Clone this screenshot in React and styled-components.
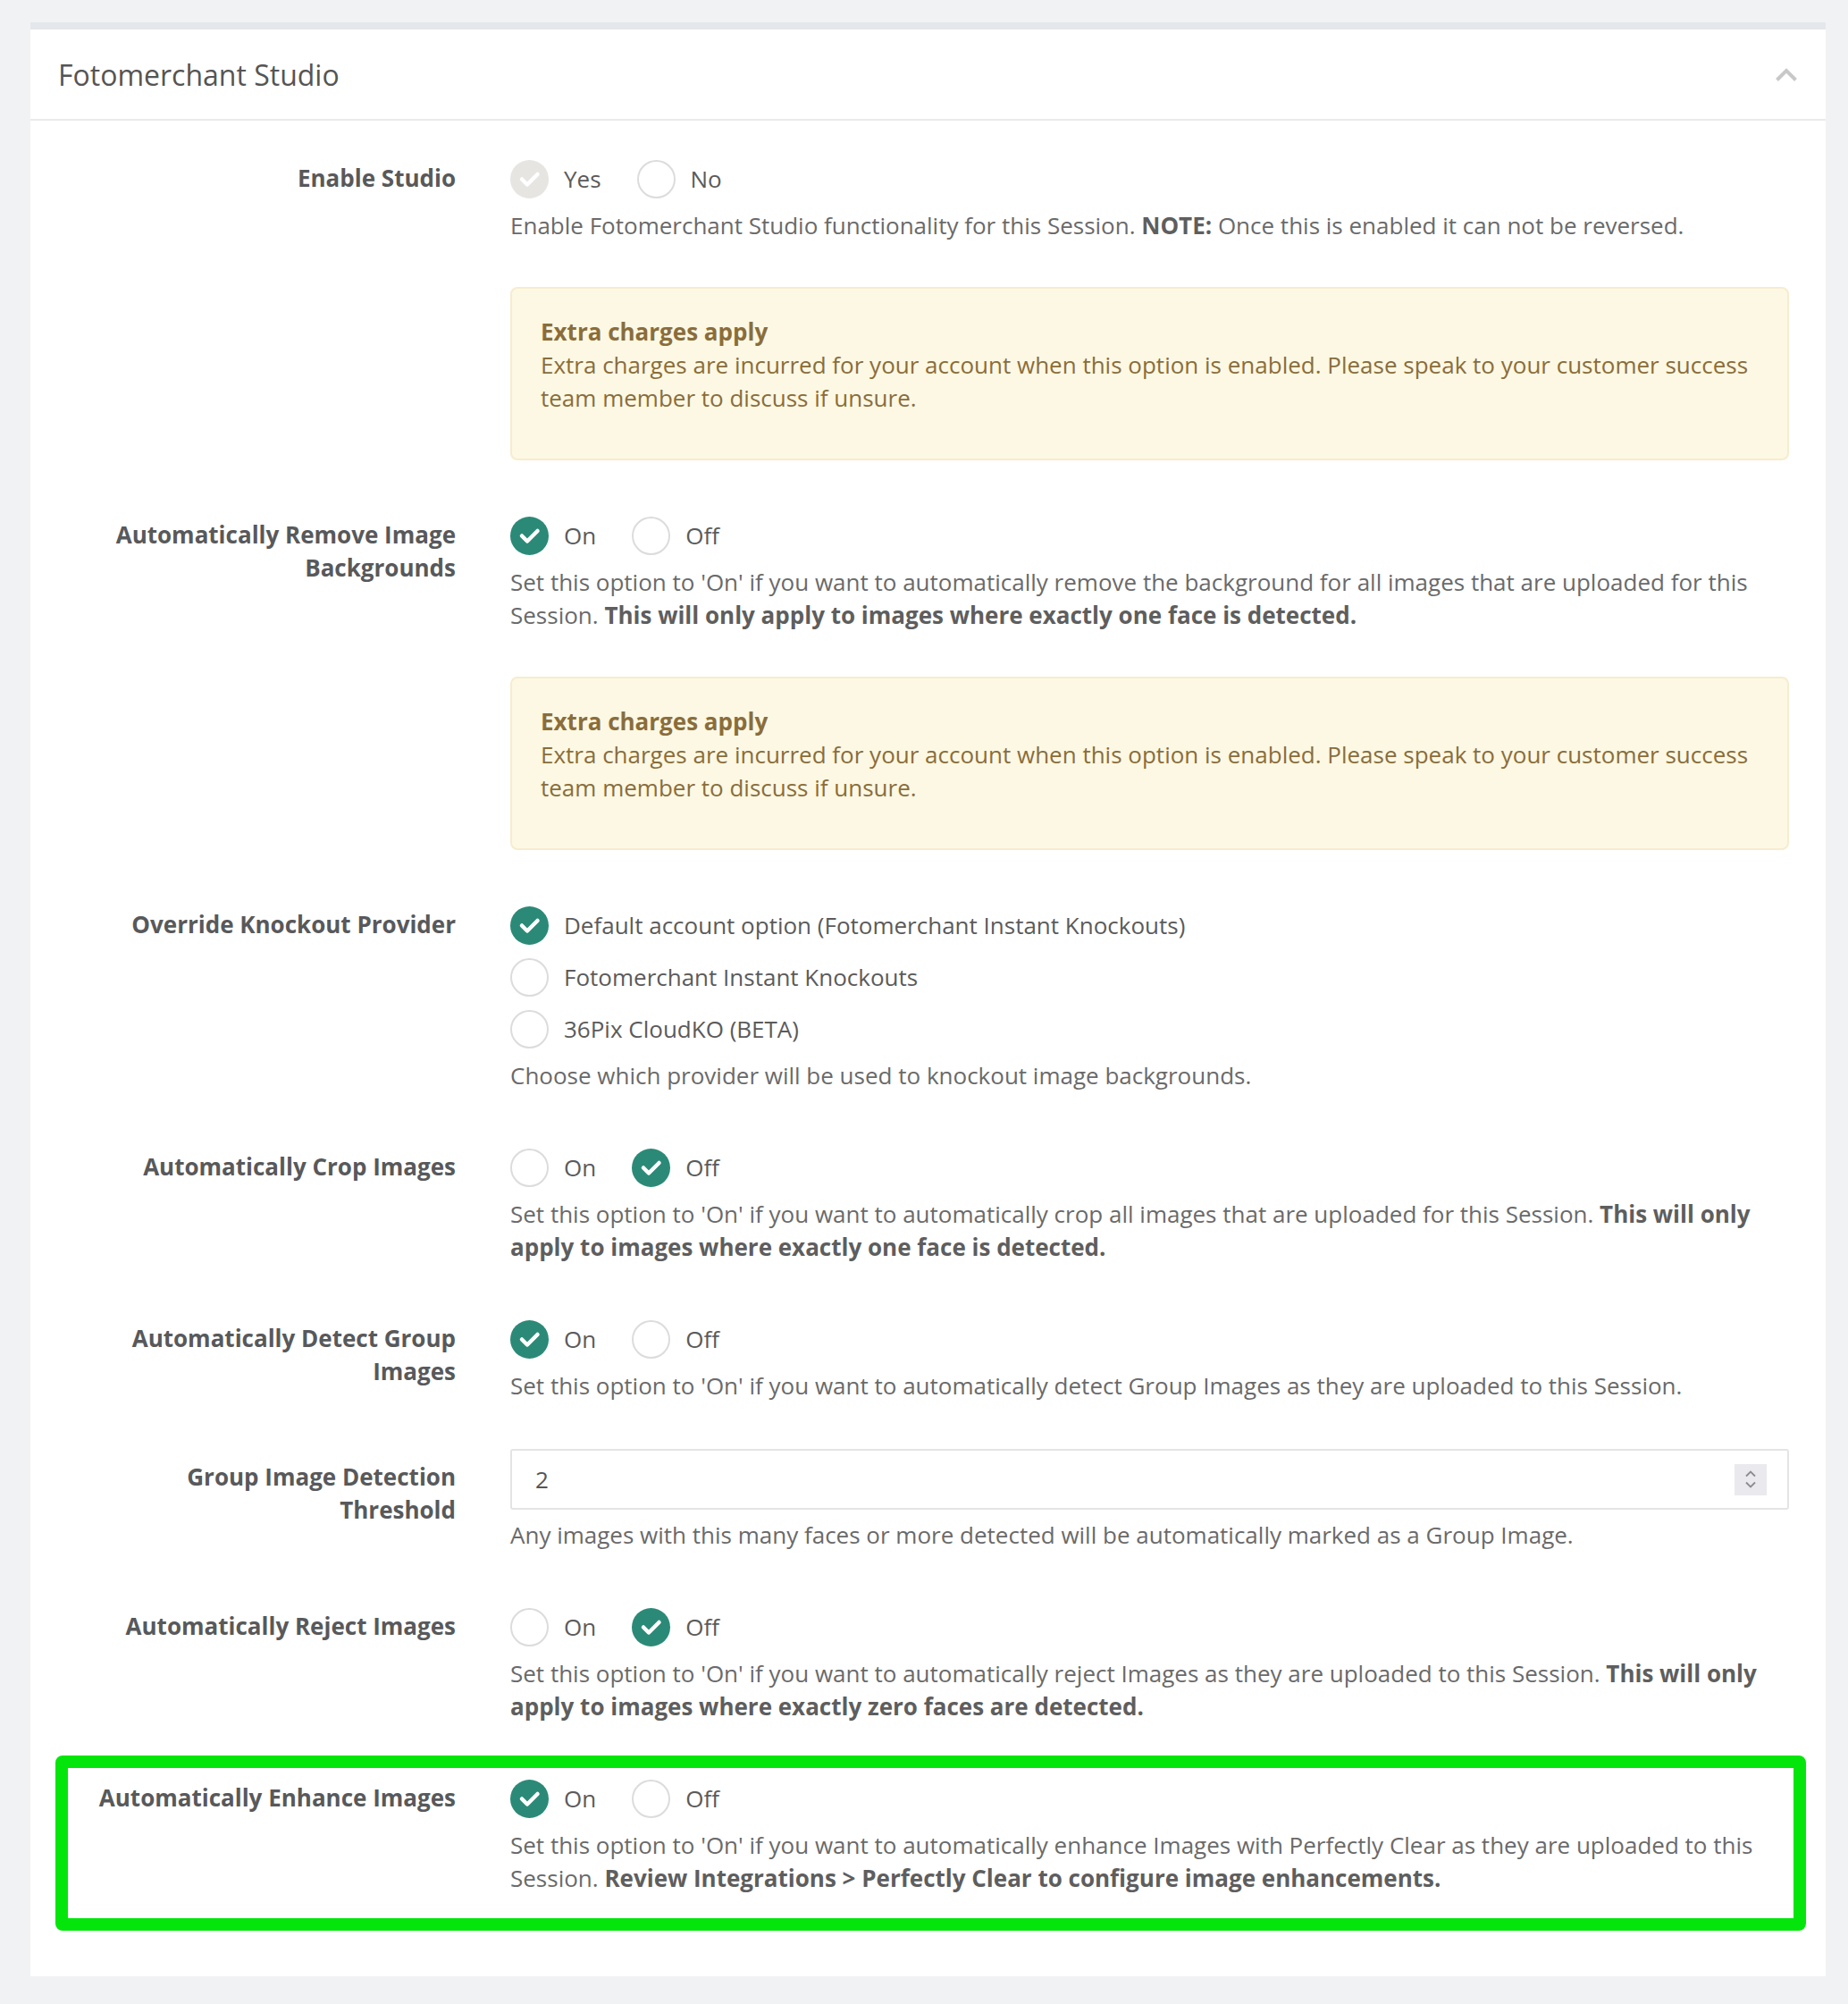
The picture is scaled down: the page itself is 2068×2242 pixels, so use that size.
import React from 'react'
import styled, { createGlobalStyle } from 'styled-components'

const GlobalStyle = createGlobalStyle`
  html, body {
    margin: 0;
    background: #f1f2f4;
  }
  body {
    font-family: "Open Sans", "Liberation Sans", sans-serif;
    color: #666;
  }
`

function App() {
  return (
    <Page>
      <GlobalStyle />
      <Card>
        <Header>
          <Title>Fotomerchant Studio</Title>
          <Collapse aria-label="Collapse">
            <svg width="26" height="17" viewBox="0 0 26 17">
              <polyline points="2.5,14.5 13,4 23.5,14.5" fill="none" stroke="#c8c8c8" strokeWidth="4" />
            </svg>
          </Collapse>
        </Header>

        <Body>
          <Row>
            <Label>Enable Studio</Label>
            <div>
              <Options>
                <Option label="Yes" checked disabled />
                <Option label="No" />
              </Options>
              <Help>
                Enable Fotomerchant Studio functionality for this Session. <b>NOTE:</b> Once this is enabled it can not be reversed.
              </Help>
              <ChargesAlert />
            </div>
          </Row>

          <Row>
            <Label>Automatically Remove Image Backgrounds</Label>
            <div>
              <Options>
                <Option label="On" checked />
                <Option label="Off" />
              </Options>
              <Help>
                Set this option to 'On' if you want to automatically remove the background for all images that are uploaded for this
                Session. <b>This will only apply to images where exactly one face is detected.</b>
              </Help>
              <ChargesAlert />
            </div>
          </Row>

          <Row>
            <Label>Override Knockout Provider</Label>
            <div>
              <Options $stacked>
                <Option label="Default account option (Fotomerchant Instant Knockouts)" checked />
                <Option label="Fotomerchant Instant Knockouts" />
                <Option label="36Pix CloudKO (BETA)" />
              </Options>
              <Help>Choose which provider will be used to knockout image backgrounds.</Help>
            </div>
          </Row>

          <Row>
            <Label>Automatically Crop Images</Label>
            <div>
              <Options>
                <Option label="On" />
                <Option label="Off" checked />
              </Options>
              <Help>
                Set this option to 'On' if you want to automatically crop all images that are uploaded for this Session. <b>This will only
                apply to images where exactly one face is detected.</b>
              </Help>
            </div>
          </Row>

          <Row>
            <Label>Automatically Detect Group Images</Label>
            <div>
              <Options>
                <Option label="On" checked />
                <Option label="Off" />
              </Options>
              <Help>Set this option to 'On' if you want to automatically detect Group Images as they are uploaded to this Session.</Help>
            </div>
          </Row>

          <Row>
            <Label>Group Image Detection Threshold</Label>
            <Control $raise>
              <NumberField>
                <span>2</span>
                <Spinner>
                  <svg width="14" height="24" viewBox="0 0 14 24">
                    <polyline points="2,8.5 7,3.5 12,8.5" fill="none" stroke="#8b8b90" strokeWidth="1.8" />
                    <polyline points="2,15.5 7,20.5 12,15.5" fill="none" stroke="#8b8b90" strokeWidth="1.8" />
                  </svg>
                </Spinner>
              </NumberField>
              <Help $gap={10}>Any images with this many faces or more detected will be automatically marked as a Group Image.</Help>
            </Control>
          </Row>

          <Row>
            <Label>Automatically Reject Images</Label>
            <div>
              <Options>
                <Option label="On" />
                <Option label="Off" checked />
              </Options>
              <Help>
                Set this option to 'On' if you want to automatically reject Images as they are uploaded to this Session. <b>This will only
                apply to images where exactly zero faces are detected.</b>
              </Help>
            </div>
          </Row>

          <Highlight>
            <Row $labelCol={434} $padRight={5}>
              <Label>Automatically Enhance Images</Label>
              <div>
                <Options>
                  <Option label="On" checked />
                  <Option label="Off" />
                </Options>
                <Help>
                  Set this option to 'On' if you want to automatically enhance Images with Perfectly Clear as they are uploaded to this
                  Session. <b>Review Integrations &gt; Perfectly Clear to configure image enhancements.</b>
                </Help>
              </div>
            </Row>
          </Highlight>
        </Body>
      </Card>
    </Page>
  )
}

function Option({ label, checked, disabled }) {
  return (
    <OptionItem>
      <Radio $checked={checked} $disabled={disabled}>
        {checked && (
          <svg width="43" height="43" viewBox="0 0 43 43">
            <polyline points="13,21.5 19,27.5 30.5,16" fill="none" stroke="#fff" strokeWidth="4.5" strokeLinecap="round" strokeLinejoin="round" />
          </svg>
        )}
      </Radio>
      <OptionText>{label}</OptionText>
    </OptionItem>
  )
}

function ChargesAlert() {
  return (
    <Alert>
      <AlertTitle>Extra charges apply</AlertTitle>
      Extra charges are incurred for your account when this option is enabled. Please speak to your customer success
      team member to discuss if unsure.
    </Alert>
  )
}

const Page = styled.div`
  padding: 25px 25px 31px 34px;
`

const Card = styled.section`
  background: #fff;
  border-top: 8px solid #e4e7eb;
`

const Header = styled.header`
  height: 100px;
  display: flex;
  align-items: center;
  justify-content: space-between;
  padding: 0 31px;
  border-bottom: 2px solid #e9eaec;
`

const Title = styled.h2`
  margin: 0;
  font-size: 32px;
  font-weight: 400;
  color: #555;
`

const Collapse = styled.button`
  border: 0;
  background: none;
  padding: 0;
  display: flex;
  cursor: pointer;
`

const Body = styled.div`
  display: flex;
  flex-direction: column;
  gap: 63px;
  padding: 44px 0 51px;
`

const Row = styled.div`
  display: grid;
  grid-template-columns: ${p => p.$labelCol || 476}px 1fr;
  column-gap: 61px;
  padding-right: ${p => p.$padRight ?? 41}px;
  align-items: start;
`

const Label = styled.div`
  justify-self: end;
  max-width: 415px;
  margin-top: 2px;
  text-align: right;
  font-size: 26px;
  line-height: 37px;
  font-weight: 700;
  color: #58595b;
`

const Control = styled.div`
  margin-top: ${p => (p.$raise ? -11 : 0)}px;
`

const Options = styled.div`
  display: flex;
  flex-direction: ${p => (p.$stacked ? 'column' : 'row')};
  gap: ${p => (p.$stacked ? '15px' : '40px')};
`

const OptionItem = styled.label`
  display: flex;
  align-items: center;
  gap: 17px;
  cursor: pointer;
`

const Radio = styled.span`
  width: 43px;
  height: 43px;
  box-sizing: border-box;
  border-radius: 50%;
  flex: none;
  display: flex;
  background: ${p => (p.$checked ? (p.$disabled ? '#e6e5e2' : '#2b8a77') : '#fff')};
  border: ${p => (p.$checked ? 'none' : '2px solid #dcdcdc')};
`

const OptionText = styled.span`
  font-size: 26px;
  line-height: 37px;
  color: #5b5b5b;
`

const Help = styled.p`
  margin: ${p => p.$gap ?? 12}px 0 0;
  font-size: 26px;
  line-height: 37px;
  color: #6a6a6a;

  b {
    font-weight: 700;
    color: #5e5e5e;
  }
`

const Alert = styled.div`
  margin-top: 50px;
  padding: 30px 32px 49px;
  background: #fcf8e3;
  border: 2px solid #f7ecd0;
  border-radius: 8px;
  font-size: 26px;
  line-height: 37px;
  color: #8a6d3b;
`

const AlertTitle = styled.div`
  font-weight: 700;
`

const NumberField = styled.div`
  height: 68px;
  box-sizing: border-box;
  border: 2px solid #e4e4e4;
  border-radius: 3px;
  display: flex;
  align-items: center;
  justify-content: space-between;
  padding: 0 23px 0 26px;
  font-size: 26px;
  color: #555;
`

const Spinner = styled.span`
  width: 36px;
  height: 35px;
  background: #e9e9ee;
  display: flex;
  align-items: center;
  justify-content: center;
`

const Highlight = styled.div`
  margin: -27.5px 22px 0 28px;
  padding: 13.5px 0 25.5px;
  border: 14px solid #04e60b;
  border-radius: 8px;
`

export default App
